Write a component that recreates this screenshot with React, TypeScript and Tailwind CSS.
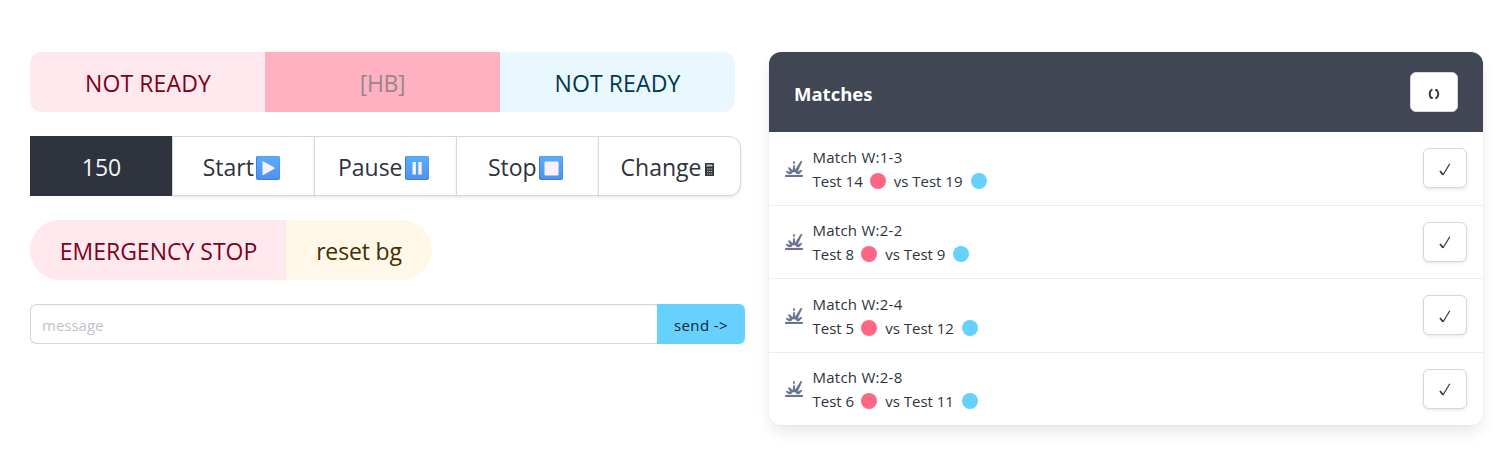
import { FaExplosion } from "react-icons/fa6";

type Match = { id: string; red: string; blue: string; height: string };

const matches: Match[] = [
  { id: "W:1-3", red: "Test 14", blue: "Test 19", height: "h-[74px]" },
  { id: "W:2-2", red: "Test 8", blue: "Test 9", height: "h-[73px]" },
  { id: "W:2-4", red: "Test 5", blue: "Test 12", height: "h-[74px]" },
  { id: "W:2-8", red: "Test 6", blue: "Test 11", height: "h-[72px]" },
];

function MediaKey({ kind }: { kind: "play" | "pause" | "stop" }) {
  return (
    <svg className="ml-[2.5px] h-6 w-6 shrink-0" viewBox="0 0 24 24">
      <defs>
        <linearGradient id={`key-${kind}`} x1="0" y1="0" x2="0" y2="1">
          <stop offset="0" stopColor="#57aefd" />
          <stop offset="1" stopColor="#5092ee" />
        </linearGradient>
      </defs>
      <rect width="24" height="24" rx="2" fill="#3f80e0" />
      <rect x="1" y="0.3" width="22.7" height="22.5" rx="2" fill={`url(#key-${kind})`} />
      {kind === "play" && <path d="M6.5 5.8v12.8q0 .9.9.4l11-6.2q.8-.6 0-1.2l-11-6.2q-.9-.5-.9.4z" fill="#fbf0ff" />}
      {kind === "pause" && <path d="M7.5 6h3.4v12.5H7.5zM13.3 6h3.4v12.5h-3.4z" fill="#fbf0ff" />}
      {kind === "stop" && <rect x="5.5" y="5.5" width="14" height="14" rx="1" fill="#fbf0ff" />}
    </svg>
  );
}

function Calculator() {
  return (
    <svg className="mt-[3px] ml-1 h-[13px] w-[9px] shrink-0" viewBox="0 0 9 13">
      <rect width="9" height="13" rx="0.5" fill="#2e333d" />
      <rect x="1.5" y="1.5" width="6" height="2" fill="#b9bdc4" />
      <path d="M2 6h1.3M4 6h1.3M6 6h1.3M2 8.5h1.3M4 8.5h1.3M6 8.5h1.3M2 11h1.3M4 11h1.3M6 11h1.3" stroke="#c3c6cc" strokeWidth="1" />
    </svg>
  );
}

function Refresh() {
  return (
    <svg className="h-3 w-3" viewBox="0 0 12 12" fill="none" stroke="#2e333d" strokeWidth="1.9">
      <path d="M4.4 1.3C.9 3.3.9 8 3.7 10.3M7.6 10.7C11.1 8.7 11.1 4 8.3 1.7" />
      <path d="M2.6 10.5h1.9V9M9.4 1.5H7.5V3" strokeWidth="0.8" />
    </svg>
  );
}

function Check() {
  return (
    <svg className="h-[13px] w-3" viewBox="0 0 12 13" fill="none" stroke="#2e333d">
      <path d="M1 8l3 3.7" strokeWidth="1.7" />
      <path d="M4 12L10.8.8" strokeWidth="1.2" />
    </svg>
  );
}

const mediumButton = "flex h-[60px] items-center justify-center pt-[3px] text-[23px] whitespace-nowrap";
const control = "relative -ml-px flex h-[60px] w-[143px] items-center justify-center border border-[#d5d7e0] bg-white pt-[3px] pr-1 whitespace-nowrap shadow-[0_1px_2px_rgba(10,10,10,0.05),0_2px_4px_rgba(10,10,10,0.05)]";

export default function App() {
  return (
    <main className="flex h-[459px] w-[1507px] gap-6 bg-white px-[30px] pt-[52px] font-['Open_Sans','Noto_Sans',sans-serif] text-[#2e333d]">
      <section className="flex w-[715px] shrink-0 flex-col gap-6">
        <div className="flex w-[705px] overflow-hidden rounded-xl">
          <button className={`${mediumButton} w-[235px] bg-[#ffe9ee] pl-px tracking-[0.1px] text-[#7f0019]`}>NOT READY</button>
          <button className={`${mediumButton} w-[235px] bg-[#ffb1c2] tracking-[-0.4px] text-[#98868c]`}>[HB]</button>
          <button className={`${mediumButton} w-[235px] bg-[#e9f7fe] tracking-[0.1px] text-[#00374f]`}>NOT READY</button>
        </div>

        <div className="flex text-[23px]">
          <div className="flex h-[60px] w-[143px] items-center justify-center bg-[#2e333d] pt-[3px] text-[#f3f4f6]">150</div>
          <button className={control}>Start<MediaKey kind="play" /></button>
          <button className={control}>Pause<MediaKey kind="pause" /></button>
          <button className={control}>Stop<MediaKey kind="stop" /></button>
          <button className={`${control} rounded-r-xl`}>Change<Calculator /></button>
        </div>

        <div className="flex">
          <button className={`${mediumButton} w-[256px] rounded-l-full bg-[#ffe9ee] pl-px text-[#7f0019]`}>EMERGENCY STOP</button>
          <button className={`${mediumButton} w-[146px] rounded-r-full bg-[#fff8e9] tracking-[-0.15px] text-[#422f00]`}>reset bg</button>
        </div>

        <form className="flex h-10 text-[15px]" onSubmit={(e) => e.preventDefault()}>
          <input
            className="h-10 min-w-0 grow rounded-l-md border border-r-0 border-[#d5d7e0] px-[11px] pt-px shadow-[inset_0_1px_2px_rgba(10,10,10,0.05)] placeholder:text-[#bfc2c8]"
            placeholder="message"
          />
          <button className="h-10 w-[88px] rounded-r-md bg-[#66d1ff] pt-[3px] tracking-[0.4px] text-[#0f2530]">send -&gt;</button>
        </form>
      </section>

      <section className="h-[373px] w-[714px] shrink-0 rounded-xl shadow-[0_8px_16px_-2px_rgba(10,10,10,0.1),0_0_0_1px_rgba(10,10,10,0.02)]">
        <header className="flex h-20 items-center justify-between rounded-t-xl bg-[#404654] pr-[25px] pl-[25px]">
          <h1 className="pt-1 text-[18.5px] font-bold text-white">Matches</h1>
          <button className="flex h-10 w-12 items-center justify-center rounded-md border border-[#d5d7e0] bg-white pt-[3px]"><Refresh /></button>
        </header>
        {matches.map((m) => (
          <div key={m.id} className={`${m.height} flex items-center border-b border-[#ededed] px-4 pb-[0.5px] text-[15px] leading-6 last:border-0 last:pb-px`}>
            <FaExplosion className="mt-px h-4 w-[18px] stroke-[#69748c] text-[#69748c] [stroke-width:8px]" />
            <div className="ml-[9.5px] pt-px">
              <div className="tracking-[0.25px]">Match {m.id}</div>
              <div className="flex items-center whitespace-nowrap">
                <span>{m.red}</span>
                <span className="mr-2 ml-[7px] h-4 w-4 rounded-full bg-[#ff6685]" />
                <span>vs {m.blue}</span>
                <span className="ml-2 h-4 w-4 rounded-full bg-[#66d1ff]" />
              </div>
            </div>
            <button className="ml-auto flex h-10 w-11 items-center justify-center rounded-md border border-[#d5d7e0] bg-white pt-0.5 shadow-[0_1px_2px_rgba(10,10,10,0.05),0_2px_4px_rgba(10,10,10,0.05)]"><Check /></button>
          </div>
        ))}
      </section>
    </main>
  );
}
